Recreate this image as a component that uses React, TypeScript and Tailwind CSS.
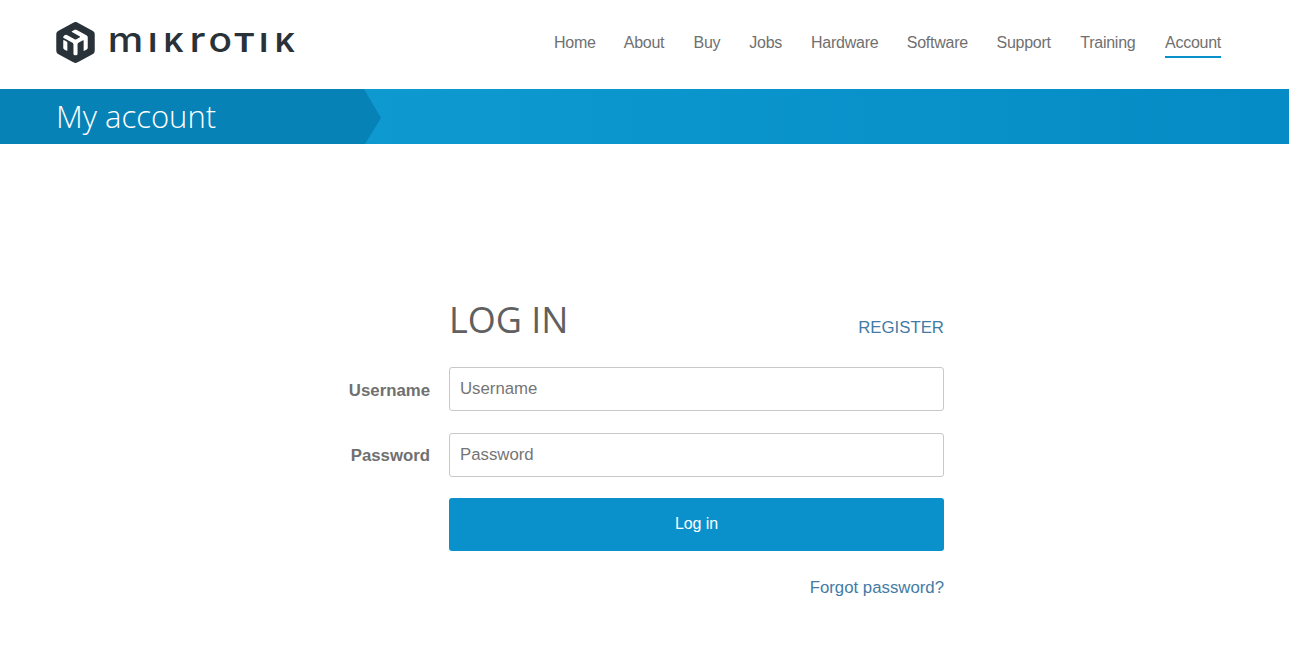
import { useState } from 'react';
import { SiMikrotik } from 'react-icons/si';

const navItems = [
  { label: 'Home', width: 'w-[41px]' },
  { label: 'About', width: 'w-[41px]' },
  { label: 'Buy', width: 'w-[27px]' },
  { label: 'Jobs', width: 'w-[33px]' },
  { label: 'Hardware', width: 'w-[67px]' },
  { label: 'Software', width: 'w-[61px]' },
  { label: 'Support', width: 'w-[55px]' },
  { label: 'Training', width: 'w-[56px]' },
  { label: 'Account', width: 'w-[56px]' },
];

// wordmark letters: lowercase ones are set larger so every letter has the same height
const letters = [
  { char: 'm', x: 11.8, length: 35.5, size: 34, weight: 500 },
  { char: 'I', x: 52.5, length: 8.4, size: 26, weight: 700 },
  { char: 'K', x: 68, length: 20, size: 26, weight: 700 },
  { char: 'r', x: 93.5, length: 16, size: 34, weight: 500 },
  { char: 'o', x: 112.5, length: 23.5, size: 34, weight: 500 },
  { char: 'T', x: 137.5, length: 21.5, size: 26, weight: 700 },
  { char: 'I', x: 163.4, length: 8.4, size: 26, weight: 700 },
  { char: 'K', x: 179.3, length: 20, size: 26, weight: 700 },
];

const Logo = () => (
  <a href="#" className="flex h-[85px] items-center text-[#293239]" aria-label="MikroTik">
    <SiMikrotik className="h-[41px] w-[41px]" />
    <svg width="210" height="61" fill="currentColor" fontFamily="Inter, sans-serif">
      {letters.map(({ char, x, length, size, weight }, index) => (
        <text
          key={index}
          x={x}
          y="39.5"
          fontSize={size}
          fontWeight={weight}
          textLength={length}
          lengthAdjust="spacingAndGlyphs"
        >
          {char}
        </text>
      ))}
    </svg>
  </a>
);

const Field = ({ label, type, value, onChange }) => (
  <div className="flex items-center">
    <label className={`w-[430px] text-right font-bold ${type === 'password' ? 'pt-[1px]' : 'pt-[3px]'}`}>
      {label}
    </label>
    <input
      type={type}
      placeholder={label}
      value={value}
      onChange={e => onChange(e.target.value)}
      className="ml-[19px] h-[44px] w-[495px] rounded-[3px] border border-[#c8c8c8] px-[10px] outline-none placeholder:text-[#757575]"
    />
  </div>
);

export default function App() {
  const [username, setUsername] = useState('');
  const [password, setPassword] = useState('');

  return (
    <div className="min-h-screen overflow-hidden bg-white font-['Liberation_Sans',Arial,sans-serif] text-[16.8px] text-[#707070]">
      {/* Header */}
      <header className="flex h-[89px] items-start justify-between pl-[55px] pr-[68px]">
        <Logo />
        <nav className="flex gap-[28.75px] pt-[30px] text-base tracking-[-0.25px]">
          {navItems.map(item => (
            <a
              key={item.label}
              href="#"
              className={`${item.width} h-[28px] whitespace-nowrap leading-[25px] ${
                item.label === 'Account' ? 'border-b-2 border-[#0a91cb]' : ''
              }`}
            >
              {item.label}
            </a>
          ))}
        </nav>
      </header>

      {/* Title bar */}
      <div className="h-[55px] bg-linear-to-r from-[#0e9ad1] from-28% to-[#058bc5]">
        <div className="flex h-full w-[381px] items-center bg-[#0782b7] pl-[56px] [clip-path:polygon(0_0,364px_0,100%_29px,365px_100%,0_100%)]">
          <h1 className="font-['Open_Sans',sans-serif] text-[31px] font-light text-white">My account</h1>
        </div>
      </div>

      {/* Login form */}
      <form className="pt-[151px]" onSubmit={e => e.preventDefault()}>
        <div className="ml-[449px] flex h-[72px] w-[495px] justify-between">
          <h2 className="font-['Open_Sans',sans-serif] text-[36px] leading-[49px] text-[#606060]">LOG IN</h2>
          <a href="#" className="pt-[20px] text-[#437ba6]">REGISTER</a>
        </div>
        <div className="flex flex-col gap-[22px]">
          <Field label="Username" type="text" value={username} onChange={setUsername} />
          <Field label="Password" type="password" value={password} onChange={setPassword} />
        </div>
        <div className="ml-[449px] flex w-[495px] flex-col">
          <button
            type="submit"
            className="mt-[21px] h-[53px] rounded-[3px] bg-[#0a91cb] pb-[2px] text-base tracking-[-0.1px] text-white"
          >
            Log in
          </button>
          <a href="#" className="mt-[24px] self-end text-[#437ba6]">Forgot password?</a>
        </div>
      </form>
    </div>
  );
}
